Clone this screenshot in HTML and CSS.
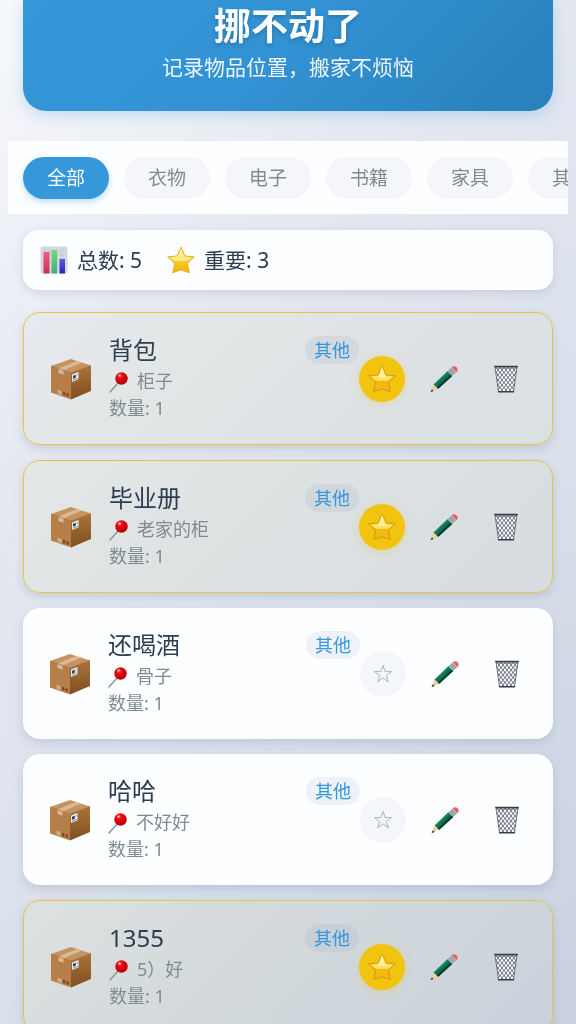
FILE: index.html
```html
<!DOCTYPE html>
<html lang="zh-CN">
<head>
<meta charset="utf-8">
<meta name="viewport" content="width=device-width, initial-scale=1">
<title>挪不动了</title>
<link rel="stylesheet" href="styles.css">
</head>
<body>
<svg class="sprite" aria-hidden="true">
  <defs>
    <linearGradient id="g-star" x1="0" y1="0" x2="0" y2="1"><stop offset="0" stop-color="#fbd03c"/><stop offset=".5" stop-color="#ffe052"/><stop offset=".56" stop-color="#fbc91f"/><stop offset="1" stop-color="#f5b20c"/></linearGradient>
    <linearGradient id="g-shine" x1="0" y1="0" x2="0" y2="1"><stop offset="0" stop-color="#fff3a8"/><stop offset="1" stop-color="#fde87a"/></linearGradient>
    <linearGradient id="g-side" x1="0" y1="0" x2="0" y2="1"><stop offset="0" stop-color="#aa733b"/><stop offset="1" stop-color="#80501f"/></linearGradient>
    <linearGradient id="g-red" x1="0" y1="0" x2="0" y2="1"><stop offset="0" stop-color="#ee5d84"/><stop offset="1" stop-color="#c92f52"/></linearGradient>
    <linearGradient id="g-green" x1="0" y1="0" x2="0" y2="1"><stop offset="0" stop-color="#6be070"/><stop offset="1" stop-color="#3fae7c"/></linearGradient>
    <linearGradient id="g-blue" x1="0" y1="0" x2="0" y2="1"><stop offset="0" stop-color="#5a5be6"/><stop offset="1" stop-color="#2c22b4"/></linearGradient>
    <radialGradient id="g-pin" cx=".4" cy=".3" r=".7"><stop offset="0" stop-color="#ff3a3a"/><stop offset=".4" stop-color="#e0040c"/><stop offset="1" stop-color="#b30008"/></radialGradient>
    <pattern id="p-mesh" width="4" height="5" patternUnits="userSpaceOnUse"><path d="M0 0l4 5M4 0L0 5" stroke="#4d5863" stroke-width=".8"/></pattern>
  </defs>
  <symbol id="i-chart" viewBox="0 0 28 28">
    <rect x=".5" y=".5" width="27" height="27" rx="1.5" fill="#d5d9e2"/>
    <path d="M1 5h26M1 9h26M1 13h26M1 17h26M1 21h26M5 1v26M9 1v26M17 1v26M22 1v26" stroke="#c3c8d4" stroke-width=".6"/>
    <rect x="3.500" y="6" width="6" height="21.500" fill="url(#g-red)"/>
    <rect x="11.500" y="4" width="5.500" height="23.500" fill="url(#g-green)"/>
    <rect x="19.500" y="13" width="5.500" height="14.500" fill="url(#g-blue)"/>
  </symbol>
  <symbol id="i-star" viewBox="0 0 28 28">
    <path d="M14 1.200l3.900 8.700 9.400 1-7 6.400 2 9.400L14 23.800l-8.300 2.900 2-9.400-7-6.400 9.400-1z" fill="url(#g-star)" stroke="#e9a41c" stroke-width=".9" stroke-linejoin="round"/>
    <path d="M14 2.600l3.200 8 8 1-5 3.400H7.800l-5-3.400 8-1z" fill="url(#g-shine)"/>
  </symbol>
  <symbol id="i-star-gold" viewBox="0 0 28 28">
    <path d="M14 1.200l3.900 8.700 9.400 1-7 6.400 2 9.400L14 23.800l-8.300 2.900 2-9.400-7-6.400 9.400-1z" fill="#f2b90f" stroke="#dd9212" stroke-width="1" stroke-linejoin="round"/>
    <path d="M14 2l3.300 8.400 8.500 1.200-5.500 4.200H7.700l-5.500-4.200 8.500-1.200z" fill="#ffe262"/>
    <path d="M14 2l3.300 8.400.6 2.600h-7.800l.6-2.600z" fill="#fff09c"/>
  </symbol>
  <symbol id="i-star-line" viewBox="0 0 20 20">
    <path d="M10 1.500l2.100 6.100h6.400l-5.200 3.900 2 6.300-5.300-3.900-5.300 3.900 2-6.300-5.200-3.900h6.400z" fill="none" stroke="#a3abb0" stroke-width=".9"/>
  </symbol>
  <symbol id="i-box" viewBox="0 0 42 42">
    <path d="M1 8L21 1l20 6.500L21 15z" fill="#c69360"/>
    <path d="M1 8L21 15v26.500L1 34.500z" fill="#b67f49"/>
    <path d="M21 15l20-7.500v25.500L21 41.500z" fill="url(#g-side)"/>
    <path d="M8.500 10.600L27 3l5 1.600L13.500 12.400v4.400l-5-1.700z" fill="#dab996"/>
    <path d="M1 8L21 15l20-7.500" fill="none" stroke="#976530" stroke-width=".6"/>
    <path d="M22 16.500l6.500-2.400v7.400L22 24z" fill="#e8ebee"/>
    <path d="M23 17.700l2.800-1v3l-2.800 1z" fill="#2d435a"/>
    <path d="M26.600 17l1.200-.4M23 22.300l4.800-1.800" stroke="#5f7182" stroke-width=".8"/>
    <path d="M7.500 31.500l4.200 1.400v4.300l-4.200-1.400z" fill="#d0ab84"/>
    <path d="M12.800 33.600l2.600.9v3.300l-2.600-.9zM16.500 34.900l2.400.8v3.300l-2.400-.8z" fill="#86491c"/>
  </symbol>
  <symbol id="i-pin" viewBox="0 0 20 22">
    <path d="M1 21L9.500 11.500" stroke="#8d959b" stroke-width="1.500" stroke-linecap="round"/>
    <circle cx="12.500" cy="7.500" r="6.200" fill="url(#g-pin)"/>
    <circle cx="10.500" cy="4.500" r="1.300" fill="#ffb3b3"/>
  </symbol>
  <symbol id="i-pencil" viewBox="0 0 28 28">
    <path d="M.7 27l3-7.500 4.600 4.200z" fill="#efcf95"/>
    <path d="M.5 27.300l1.400-3 1.700 1.700z" fill="#3b3b3b"/>
    <path d="M3.700 19.500L17.500 6.200l4.700 4.900L8.300 23.700z" fill="#0b6f53"/>
    <path d="M6.800 22.400L20.600 9.500l1.600 1.600L8.300 23.700z" fill="#053c2e"/>
    <path d="M3.700 19.500L17.500 6.200l1.200 1.200L4.900 20.600z" fill="#1f8565"/>
    <path d="M17.500 6.200l4.300-4 4.600 4.900-4.200 4z" fill="#b1b2ba"/>
    <path d="M18.800 5l4.600 4.900M20.300 3.600l4.600 4.900" stroke="#777982" stroke-width=".7"/>
    <path d="M21.800 2.200c2-2.200 7-.2 5.600 4l-1 .9z" fill="#ea5f63"/>
  </symbol>
  <symbol id="i-trash" viewBox="0 0 24 28">
    <path d="M1 2h22l-3.500 24.500h-15z" fill="#f4f6f7"/>
    <path d="M1 2h22l-3.500 24.500h-15z" fill="url(#p-mesh)" stroke="#4d5863" stroke-width=".8"/>
    <path d="M.8 1.500h22.400M4.500 26.800h15" stroke="#353f4b" stroke-width="1.500" stroke-linecap="round"/>
    <path d="M1.500 3.500h21" stroke="#818b94" stroke-width=".8"/>
  </symbol>
</svg>

<div class="page">
  <header class="hero">
    <h1 class="hero-title">挪不动了</h1>
    <p class="hero-sub">记录物品位置，搬家不烦恼</p>
  </header>

  <nav class="tabs" aria-label="分类">
    <button class="tab tab-active" type="button">全部</button>
    <button class="tab" type="button">衣物</button>
    <button class="tab" type="button">电子</button>
    <button class="tab" type="button">书籍</button>
    <button class="tab" type="button">家具</button>
    <button class="tab" type="button">其他</button>
  </nav>

  <section class="stats">
    <span class="stat"><svg class="stat-icon" aria-hidden="true"><use href="#i-chart"/></svg>总数: 5</span>
    <span class="stat"><svg class="stat-icon" aria-hidden="true"><use href="#i-star"/></svg>重要: 3</span>
  </section>

  <main class="list">
    <article class="card card-important">
      <svg class="card-icon" aria-hidden="true"><use href="#i-box"/></svg>
      <div class="info">
        <div class="info-head"><h2 class="name">背包</h2><span class="tag">其他</span></div>
        <p class="meta"><svg class="pin" aria-hidden="true"><use href="#i-pin"/></svg>柜子</p>
        <p class="meta">数量: 1</p>
      </div>
      <div class="actions">
        <button class="action action-on" type="button" aria-label="取消重要"><svg class="action-icon"><use href="#i-star-gold"/></svg></button>
        <button class="action" type="button" aria-label="编辑"><svg class="action-icon"><use href="#i-pencil"/></svg></button>
        <button class="action" type="button" aria-label="删除"><svg class="action-icon"><use href="#i-trash"/></svg></button>
      </div>
    </article>

    <article class="card card-important">
      <svg class="card-icon" aria-hidden="true"><use href="#i-box"/></svg>
      <div class="info">
        <div class="info-head"><h2 class="name">毕业册</h2><span class="tag">其他</span></div>
        <p class="meta"><svg class="pin" aria-hidden="true"><use href="#i-pin"/></svg>老家的柜</p>
        <p class="meta">数量: 1</p>
      </div>
      <div class="actions">
        <button class="action action-on" type="button" aria-label="取消重要"><svg class="action-icon"><use href="#i-star-gold"/></svg></button>
        <button class="action" type="button" aria-label="编辑"><svg class="action-icon"><use href="#i-pencil"/></svg></button>
        <button class="action" type="button" aria-label="删除"><svg class="action-icon"><use href="#i-trash"/></svg></button>
      </div>
    </article>

    <article class="card">
      <svg class="card-icon" aria-hidden="true"><use href="#i-box"/></svg>
      <div class="info">
        <div class="info-head"><h2 class="name">还喝酒</h2><span class="tag">其他</span></div>
        <p class="meta"><svg class="pin" aria-hidden="true"><use href="#i-pin"/></svg>骨子</p>
        <p class="meta">数量: 1</p>
      </div>
      <div class="actions">
        <button class="action action-off" type="button" aria-label="标为重要"><svg class="action-icon action-icon-small"><use href="#i-star-line"/></svg></button>
        <button class="action" type="button" aria-label="编辑"><svg class="action-icon"><use href="#i-pencil"/></svg></button>
        <button class="action" type="button" aria-label="删除"><svg class="action-icon"><use href="#i-trash"/></svg></button>
      </div>
    </article>

    <article class="card">
      <svg class="card-icon" aria-hidden="true"><use href="#i-box"/></svg>
      <div class="info">
        <div class="info-head"><h2 class="name">哈哈</h2><span class="tag">其他</span></div>
        <p class="meta"><svg class="pin" aria-hidden="true"><use href="#i-pin"/></svg>不好好</p>
        <p class="meta">数量: 1</p>
      </div>
      <div class="actions">
        <button class="action action-off" type="button" aria-label="标为重要"><svg class="action-icon action-icon-small"><use href="#i-star-line"/></svg></button>
        <button class="action" type="button" aria-label="编辑"><svg class="action-icon"><use href="#i-pencil"/></svg></button>
        <button class="action" type="button" aria-label="删除"><svg class="action-icon"><use href="#i-trash"/></svg></button>
      </div>
    </article>

    <article class="card card-important">
      <svg class="card-icon" aria-hidden="true"><use href="#i-box"/></svg>
      <div class="info">
        <div class="info-head"><h2 class="name">1355</h2><span class="tag">其他</span></div>
        <p class="meta"><svg class="pin" aria-hidden="true"><use href="#i-pin"/></svg>5）好</p>
        <p class="meta">数量: 1</p>
      </div>
      <div class="actions">
        <button class="action action-on" type="button" aria-label="取消重要"><svg class="action-icon"><use href="#i-star-gold"/></svg></button>
        <button class="action" type="button" aria-label="编辑"><svg class="action-icon"><use href="#i-pencil"/></svg></button>
        <button class="action" type="button" aria-label="删除"><svg class="action-icon"><use href="#i-trash"/></svg></button>
      </div>
    </article>
  </main>
</div>
</body>
</html>
```

FILE: styles.css
```css
* {
  box-sizing: border-box;
}

body {
  margin: 0;
  height: 100vh;
  overflow-x: hidden;
  overflow-y: auto;
  scrollbar-width: none;
  font-family: "Noto Sans", "Noto Sans CJK SC", sans-serif;
  color: #2c3e50;
  background: linear-gradient(135deg, #f7f8fb 0%, #e5e9f2 30%, #d9e0eb 64%, #c9d1e0 100%);
}

h1, h2, p {
  margin: 0;
  font-weight: 400;
}

button {
  border: 0;
  padding: 0;
  font: inherit;
  cursor: pointer;
}

.sprite {
  position: absolute;
  width: 0;
  height: 0;
}

.page {
  padding: 0 8px 15px;
}

.hero {
  margin: 0 15px 30px;
  padding: 0 23px 28px;
  border-radius: 0 0 23px 23px;
  text-align: center;
  color: #fcfeff;
  background: linear-gradient(135deg, #3498db 0%, #3291d3 50%, #2980b9 100%);
  box-shadow: 0 4px 14px rgba(52, 152, 219, 0.25);
}

.hero-title {
  font-size: 37px;
  line-height: 52px;
  font-weight: 700;
  text-shadow: 0 2px 4px rgba(0, 0, 0, 0.2);
}

.hero-sub {
  font-size: 21px;
  line-height: 31px;
  opacity: 0.92;
}

.tabs {
  display: flex;
  gap: 15px;
  padding: 16px 15px 15px;
  overflow-x: auto;
  scrollbar-width: none;
  background: #fcfeff;
}

.tab {
  flex: none;
  padding: 0 24px;
  border-radius: 21px;
  font-size: 19px;
  line-height: 42px;
  color: #7f8c8d;
  background: #f5f6fa;
}

.tab-active {
  color: #fcfeff;
  background: #3498db;
  box-shadow: 0 3px 6px rgba(52, 152, 219, 0.3);
}

.stats {
  display: flex;
  gap: 25px;
  margin: 16px 15px 22px;
  padding: 15px 17px;
  border-radius: 15px;
  background: #fcfeff;
  box-shadow: 0 3px 10px rgba(100, 120, 150, 0.2);
}

.stat {
  display: flex;
  align-items: center;
  gap: 9px;
  font-size: 21px;
  line-height: 30px;
}

.stat-icon {
  width: 28px;
  height: 28px;
}

.list {
  display: flex;
  flex-direction: column;
  gap: 15px;
  margin: 0 15px;
}

.card {
  display: flex;
  align-items: center;
  padding: 22px 23px;
  border-radius: 17px;
  background: #fcfeff;
  box-shadow: 0 4px 10px rgba(100, 120, 150, 0.22);
}

.card-important {
  border: 1px solid #e8c53c;
  background: linear-gradient(135deg, #e8eaf2 0%, #e4e7e7 22%, #dee2e4 60%, #dadfe2 100%);
}

.card-important + .card-important {
  background: linear-gradient(135deg, #e4e7e8 0%, #dee2e3 40%, #d6dcdf 100%);
}

.card:not(.card-important) + .card-important {
  background: linear-gradient(135deg, #dce0e0 0%, #d2d9dc 50%, #c9d1dc 100%);
}

.card-icon {
  flex: none;
  width: 42px;
  height: 42px;
  margin: 0 17px 0 3px;
}

.info {
  flex: 1;
  min-width: 0;
}

.info-head {
  display: flex;
  align-items: center;
  justify-content: space-between;
  margin-bottom: 3px;
}

.name {
  font-size: 24px;
  line-height: 30px;
}

.tag {
  padding: 0 9px;
  border-radius: 14px;
  font-size: 18px;
  line-height: 28px;
  color: #3498db;
  background: rgba(52, 80, 150, 0.07);
}

.meta {
  display: flex;
  align-items: center;
  gap: 8px;
  font-size: 18px;
  line-height: 27px;
  color: #7f8c8d;
}

.pin {
  width: 20px;
  height: 22px;
}

.actions {
  display: flex;
  gap: 16px;
}

.action {
  display: flex;
  align-items: center;
  justify-content: center;
  width: 46px;
  height: 46px;
  border-radius: 50%;
  background: transparent;
}

.action-on {
  background: #f1c40f;
  box-shadow: 0 2px 8px rgba(241, 196, 15, 0.3);
}

.action-off {
  background: #f5f6fa;
}

.action-icon {
  width: 28px;
  height: 28px;
}

.action-icon-small {
  width: 20px;
  height: 20px;
}
```
